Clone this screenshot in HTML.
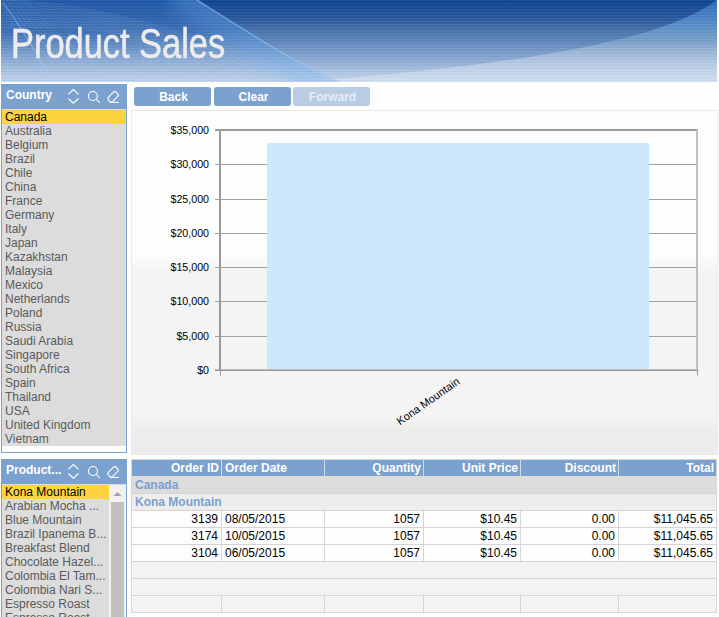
<!DOCTYPE html>
<html><head><meta charset="utf-8">
<style>
*{box-sizing:border-box;margin:0;padding:0}
html,body{width:719px;height:617px;overflow:hidden;background:#fdfdfd;font-family:"Liberation Sans",sans-serif;}
.abs{position:absolute}
#hdr{left:1px;top:0;width:716px;height:82px;overflow:hidden}
#title{left:9.5px;top:19.3px;font-size:43px;color:#ececec;white-space:nowrap;transform-origin:0 0;transform:scaleX(0.8);-webkit-text-stroke:0.6px #ececec;line-height:48px}
.panel{border:1px solid #7ba1cf;background:#fdfdfd;overflow:hidden}
.ph{position:absolute;left:0;top:0;height:24px;background:#7ba1cf;width:100%;color:#fff;font-weight:bold;font-size:12px}
.ph span{position:absolute;left:4px;top:3px;line-height:14px}
.ph svg{position:absolute;left:0;top:0}
.list{position:absolute;left:0;top:24px;background:#dcdcdc;padding-top:1px}
.it{height:14px;line-height:14px;font-size:12px;color:#5a5a5a;padding-left:3px;white-space:nowrap;overflow:hidden}
.it.sel{background:#fed43e;color:#000}
.btn{position:absolute;top:87px;height:19px;width:77px;border-radius:3px;background:#7ba1cf;color:#fff;font-weight:bold;font-size:12px;text-align:center;line-height:21px;padding-left:2px}
.btn.dis{background:#b8cce4;color:#e6edf5}
#chart{left:131px;top:110px;width:587px;height:345px;border:1px solid #e9ebe9;
 background:linear-gradient(to bottom,#fdfdfd 0px,#fdfdfd 143px,#f4f4f4 160px,#f4f4f4 303px,#ebedea 321px,#ebedea 100%)}
.yl{position:absolute;font-size:10.67px;color:#000;text-align:right;width:60px;line-height:12px}
table{border-collapse:collapse;table-layout:fixed}
#tbl{position:absolute;left:131px;top:459px;width:587px;height:155px;border:1px solid #d9d9d9;background:#fdfdfd}
.th{position:absolute;top:460px;height:16px;line-height:16px;font-size:12px;font-weight:bold;color:#fff;white-space:nowrap}
.tg{position:absolute;left:135px;height:16px;line-height:16px;font-size:12px;font-weight:bold;color:#7aa0d0;white-space:nowrap}
.td{position:absolute;height:16px;line-height:16px;font-size:12px;color:#000;white-space:nowrap}
.plist .it{width:107px}
</style></head><body>
<div id="hdr" class="abs">
<svg width="716" height="82" viewBox="0 0 716 82" style="position:absolute;left:0;top:0">
<defs>
<linearGradient id="g1" gradientUnits="userSpaceOnUse" x1="0" y1="0" x2="0" y2="82">
<stop offset="0" stop-color="#0e448f"/>
<stop offset="0.12" stop-color="#1e4f98"/>
<stop offset="0.25" stop-color="#2f5d9f"/>
<stop offset="0.37" stop-color="#4a72ac"/>
<stop offset="0.49" stop-color="#5c84b9"/>
<stop offset="0.61" stop-color="#7497c6"/>
<stop offset="0.73" stop-color="#8caad2"/>
<stop offset="0.85" stop-color="#a8c0de"/>
<stop offset="1" stop-color="#c6d6ea"/>
</linearGradient>
<linearGradient id="g2" gradientUnits="userSpaceOnUse" x1="0" y1="0" x2="0" y2="82">
<stop offset="0" stop-color="#2a6cbc"/>
<stop offset="0.25" stop-color="#4f88c4"/>
<stop offset="0.49" stop-color="#76a0c8"/>
<stop offset="0.61" stop-color="#95b2d5"/>
<stop offset="0.73" stop-color="#aec4e0"/>
<stop offset="0.85" stop-color="#c2d3e9"/>
<stop offset="1" stop-color="#d2dfef"/>
</linearGradient>
<linearGradient id="g3" gradientUnits="userSpaceOnUse" x1="0" y1="0" x2="0" y2="82">
<stop offset="0" stop-color="#1d57a5"/>
<stop offset="0.37" stop-color="#3b6db2"/>
<stop offset="0.61" stop-color="#7097c9"/>
<stop offset="0.85" stop-color="#a6c0e0"/>
<stop offset="1" stop-color="#c2d3ea"/>
</linearGradient>
<filter id="bl" x="-50%" y="-50%" width="200%" height="200%"><feGaussianBlur stdDeviation="8"/></filter>
<pattern id="stripes" width="4" height="3" patternUnits="userSpaceOnUse"><rect x="0" y="0" width="4" height="1" fill="#ffffff" opacity="0.06"/><rect x="0" y="2" width="4" height="1" fill="#000033" opacity="0.03"/></pattern>
<clipPath id="cp3"><path d="M0,0 L196,0 C256,38 307,71 345,84 L0,84 Z"/></clipPath>
</defs>
<rect x="0" y="0" width="716" height="82" fill="url(#g1)"/>
<path d="M717,-1 C660,44 500,66 290,83 L717,83 Z" fill="url(#g2)"/>
<path d="M0,0 L196,0 C256,38 307,71 345,84 L0,84 Z" fill="url(#g3)"/>
<g clip-path="url(#cp3)"><path d="M176,-8 C236,30 287,63 325,86" fill="none" stroke="#6fb0f0" stroke-width="34" opacity="0.3" filter="url(#bl)"/></g>
<g fill="none" stroke="#cfe6ff" stroke-width="0.8" opacity="0.16" clip-path="url(#cp3)"><path d="M-5,0.0 Q120,0.0 330,86"/><path d="M-5,2.2 Q126,1.5 314,86"/><path d="M-5,4.4 Q132,3.0 298,86"/><path d="M-5,6.6 Q138,4.5 282,86"/><path d="M-5,8.8 Q144,6.0 266,86"/><path d="M-5,11.0 Q150,7.5 250,86"/><path d="M-5,13.2 Q156,9.0 234,86"/><path d="M-5,15.4 Q162,10.5 218,86"/><path d="M-5,17.6 Q168,12.0 202,86"/><path d="M-5,19.8 Q174,13.5 186,86"/><path d="M-5,22.0 Q180,15.0 170,86"/><path d="M-5,24.2 Q186,16.5 154,86"/><path d="M-5,26.4 Q192,18.0 138,86"/><path d="M-5,28.6 Q198,19.5 122,86"/></g>
<g fill="none" stroke="#cfe6ff" stroke-width="0.8" opacity="0.14"><path d="M-2,0 C13,25 30,60 50,86"/><path d="M2,0 C17,25 39,60 59,86"/><path d="M6,0 C21,25 48,60 68,86"/><path d="M10,0 C25,25 57,60 77,86"/><path d="M14,0 C29,25 66,60 86,86"/><path d="M18,0 C33,25 75,60 95,86"/><path d="M22,0 C37,25 84,60 104,86"/><path d="M26,0 C41,25 93,60 113,86"/></g>
<path d="M2,3 C20,25 35,55 55,86" fill="none" stroke="#a8d4ff" stroke-width="1.2" opacity="0.35"/>
<path d="M196,0 C256,38 307,71 345,84" fill="none" stroke="#9fd0ff" stroke-width="1.5" opacity="0.5"/>
<rect x="0" y="0" width="716" height="82" fill="url(#stripes)"/>
</svg>
<div id="title" class="abs">Product Sales</div>
</div>

<!-- country panel -->
<div class="panel abs" style="left:1px;top:84px;width:126px;height:369px">
 <div class="ph"><span>Country</span><svg width="124" height="24" style="position:absolute;left:0;top:0" fill="none" stroke="#fff" stroke-width="1.1">
<polyline points="66.3,9.4 71.4,4.5 76.5,9.4"/>
<polyline points="66.3,13.5 71.4,18.2 76.5,13.5"/>
<circle cx="90.9" cy="11" r="4.5" stroke-width="1.1"/>
<line x1="94.3" y1="14.4" x2="97.8" y2="17.8"/>
<rect x="105.55" y="8.85" width="11" height="6" rx="2.2" transform="rotate(-45 111.05 11.85)" stroke-width="1.1"/>
<line x1="107.8" y1="17.4" x2="117" y2="17.4" stroke-width="1.1"/>
</svg></div>
 <div class="list" style="width:124px;height:337px">
  <div class="it sel">Canada</div>
  <div class="it">Australia</div>
  <div class="it">Belgium</div>
  <div class="it">Brazil</div>
  <div class="it">Chile</div>
  <div class="it">China</div>
  <div class="it">France</div>
  <div class="it">Germany</div>
  <div class="it">Italy</div>
  <div class="it">Japan</div>
  <div class="it">Kazakhstan</div>
  <div class="it">Malaysia</div>
  <div class="it">Mexico</div>
  <div class="it">Netherlands</div>
  <div class="it">Poland</div>
  <div class="it">Russia</div>
  <div class="it">Saudi Arabia</div>
  <div class="it">Singapore</div>
  <div class="it">South Africa</div>
  <div class="it">Spain</div>
  <div class="it">Thailand</div>
  <div class="it">USA</div>
  <div class="it">United Kingdom</div>
  <div class="it">Vietnam</div>
 </div>
</div>

<div class="btn" style="left:134px">Back</div>
<div class="btn" style="left:214px">Clear</div>
<div class="btn dis" style="left:293px">Forward</div>

<div id="chart" class="abs"></div>
<svg width="719" height="617" style="position:absolute;left:0;top:0">
<rect x="267" y="143" width="382" height="227" fill="#cce8fa"/>
<g stroke="#a0a0a0" stroke-width="1"><line x1="215" y1="164.5" x2="696" y2="164.5"/><line x1="215" y1="199.5" x2="696" y2="199.5"/><line x1="215" y1="233.5" x2="696" y2="233.5"/><line x1="215" y1="267.5" x2="696" y2="267.5"/><line x1="215" y1="301.5" x2="696" y2="301.5"/><line x1="215" y1="336.5" x2="696" y2="336.5"/></g>
<rect x="267" y="143" width="382" height="226.5" fill="#cce8fa"/>
<line x1="215" y1="130" x2="698" y2="130" stroke="#9a9a9a" stroke-width="2"/>
<line x1="697" y1="130" x2="697" y2="370" stroke="#c0c0c0" stroke-width="2"/>
<rect x="215" y="369" width="483" height="1" fill="#bdbdbd"/><rect x="215" y="370" width="483" height="1" fill="#989898"/>
<line x1="220" y1="129" x2="220" y2="371" stroke="#9a9a9a" stroke-width="2"/>
<line x1="220.5" y1="370" x2="220.5" y2="375.5" stroke="#999" stroke-width="1"/>
<line x1="697.5" y1="370" x2="697.5" y2="375.5" stroke="#999" stroke-width="1"/>
<g font-family="Liberation Sans" font-size="10.67" fill="#000" text-anchor="end"><text x="209" y="134.0">$35,000</text><text x="209" y="168.3">$30,000</text><text x="209" y="202.6">$25,000</text><text x="209" y="236.9">$20,000</text><text x="209" y="271.1">$15,000</text><text x="209" y="305.4">$10,000</text><text x="209" y="339.7">$5,000</text><text x="209" y="374.0">$0</text></g>
<text x="0" y="0" font-family="Liberation Sans" font-size="11" fill="#000" text-anchor="end" transform="translate(460.5 383) rotate(-35)">Kona Mountain</text>
</svg>

<div id="tb"><div class="abs" style="left:131px;top:459px;width:586px;height:154px;border:1px solid #d6d4d6;background:#fdfdfd"></div><div class="abs" style="left:132px;top:460px;width:584px;height:16px;background:#7ba1cf"></div><div class="abs" style="left:221px;top:460px;width:1px;height:16px;background:#d3dbe6"></div><div class="abs" style="left:324px;top:460px;width:1px;height:16px;background:#d3dbe6"></div><div class="abs" style="left:423px;top:460px;width:1px;height:16px;background:#d3dbe6"></div><div class="abs" style="left:520px;top:460px;width:1px;height:16px;background:#d3dbe6"></div><div class="abs" style="left:618px;top:460px;width:1px;height:16px;background:#d3dbe6"></div><div class="abs" style="left:132px;top:476px;width:584px;height:17px;background:#dcdcdc"></div><div class="abs" style="left:132px;top:494px;width:584px;height:16px;background:#edeeec"></div><div class="abs" style="left:132px;top:562px;width:584px;height:16px;background:#f3f3f3"></div><div class="abs" style="left:132px;top:579px;width:584px;height:16px;background:#f3f3f3"></div><div class="abs" style="left:132px;top:596px;width:584px;height:16px;background:#f3f3f3"></div><div class="abs" style="left:132px;top:493px;width:584px;height:1px;background:#d6d4d6"></div><div class="abs" style="left:132px;top:510px;width:584px;height:1px;background:#d6d4d6"></div><div class="abs" style="left:132px;top:527px;width:584px;height:1px;background:#d6d4d6"></div><div class="abs" style="left:132px;top:544px;width:584px;height:1px;background:#d6d4d6"></div><div class="abs" style="left:132px;top:561px;width:584px;height:1px;background:#d6d4d6"></div><div class="abs" style="left:132px;top:578px;width:584px;height:1px;background:#d6d4d6"></div><div class="abs" style="left:132px;top:595px;width:584px;height:1px;background:#d6d4d6"></div><div class="abs" style="left:221px;top:511px;width:1px;height:50px;background:#d6d4d6"></div><div class="abs" style="left:221px;top:596px;width:1px;height:16px;background:#d6d4d6"></div><div class="abs" style="left:324px;top:511px;width:1px;height:50px;background:#d6d4d6"></div><div class="abs" style="left:324px;top:596px;width:1px;height:16px;background:#d6d4d6"></div><div class="abs" style="left:423px;top:511px;width:1px;height:50px;background:#d6d4d6"></div><div class="abs" style="left:423px;top:596px;width:1px;height:16px;background:#d6d4d6"></div><div class="abs" style="left:520px;top:511px;width:1px;height:50px;background:#d6d4d6"></div><div class="abs" style="left:520px;top:596px;width:1px;height:16px;background:#d6d4d6"></div><div class="abs" style="left:618px;top:511px;width:1px;height:50px;background:#d6d4d6"></div><div class="abs" style="left:618px;top:596px;width:1px;height:16px;background:#d6d4d6"></div><div class="th" style="left:131px;width:88px;text-align:right">Order ID</div><div class="th" style="left:225px;width:99px;text-align:left">Order Date</div><div class="th" style="left:324px;width:97px;text-align:right">Quantity</div><div class="th" style="left:423px;width:95px;text-align:right">Unit Price</div><div class="th" style="left:520px;width:96px;text-align:right">Discount</div><div class="th" style="left:618px;width:96px;text-align:right">Total</div><div class="tg" style="top:477px">Canada</div><div class="tg" style="top:494px">Kona Mountain</div><div class="td" style="top:511px;left:131px;width:87px;text-align:right">3139</div><div class="td" style="top:511px;left:225px;width:99px;text-align:left">08/05/2015</div><div class="td" style="top:511px;left:324px;width:96px;text-align:right">1057</div><div class="td" style="top:511px;left:423px;width:94px;text-align:right">$10.45</div><div class="td" style="top:511px;left:520px;width:95px;text-align:right">0.00</div><div class="td" style="top:511px;left:618px;width:95px;text-align:right">$11,045.65</div><div class="td" style="top:528px;left:131px;width:87px;text-align:right">3174</div><div class="td" style="top:528px;left:225px;width:99px;text-align:left">10/05/2015</div><div class="td" style="top:528px;left:324px;width:96px;text-align:right">1057</div><div class="td" style="top:528px;left:423px;width:94px;text-align:right">$10.45</div><div class="td" style="top:528px;left:520px;width:95px;text-align:right">0.00</div><div class="td" style="top:528px;left:618px;width:95px;text-align:right">$11,045.65</div><div class="td" style="top:545px;left:131px;width:87px;text-align:right">3104</div><div class="td" style="top:545px;left:225px;width:99px;text-align:left">06/05/2015</div><div class="td" style="top:545px;left:324px;width:96px;text-align:right">1057</div><div class="td" style="top:545px;left:423px;width:94px;text-align:right">$10.45</div><div class="td" style="top:545px;left:520px;width:95px;text-align:right">0.00</div><div class="td" style="top:545px;left:618px;width:95px;text-align:right">$11,045.65</div></div>

<!-- product panel -->
<div class="panel abs" style="left:1px;top:459px;width:126px;height:160px">
 <div class="ph"><span>Product...</span><svg width="124" height="24" style="position:absolute;left:0;top:0" fill="none" stroke="#fff" stroke-width="1.1">
<polyline points="66.3,9.4 71.4,4.5 76.5,9.4"/>
<polyline points="66.3,13.5 71.4,18.2 76.5,13.5"/>
<circle cx="90.9" cy="11" r="4.5" stroke-width="1.1"/>
<line x1="94.3" y1="14.4" x2="97.8" y2="17.8"/>
<rect x="105.55" y="8.85" width="11" height="6" rx="2.2" transform="rotate(-45 111.05 11.85)" stroke-width="1.1"/>
<line x1="107.8" y1="17.4" x2="117" y2="17.4" stroke-width="1.1"/>
</svg></div>
 <div class="list plist" style="width:124px;height:140px">
  <div style="position:absolute;left:107px;top:1px;width:17px;height:139px;background:#f1f1f1">
   <svg width="17" height="17" style="position:absolute;left:0;top:0"><polygon points="4.5,11 8.5,7 12.5,11" fill="#a3a3a3"/></svg>
   <div style="position:absolute;left:2px;top:17px;width:13px;height:122px;background:#c1c1c1"></div>
  </div>
  <div class="it sel">Kona Mountain</div>
  <div class="it">Arabian Mocha ...</div>
  <div class="it">Blue Mountain</div>
  <div class="it">Brazil Ipanema B...</div>
  <div class="it">Breakfast Blend</div>
  <div class="it">Chocolate Hazel...</div>
  <div class="it">Colombia El Tam...</div>
  <div class="it">Colombia Nari S...</div>
  <div class="it">Espresso Roast</div>
  <div class="it">Espresso Roast</div>
 </div>
</div>
</body></html>
